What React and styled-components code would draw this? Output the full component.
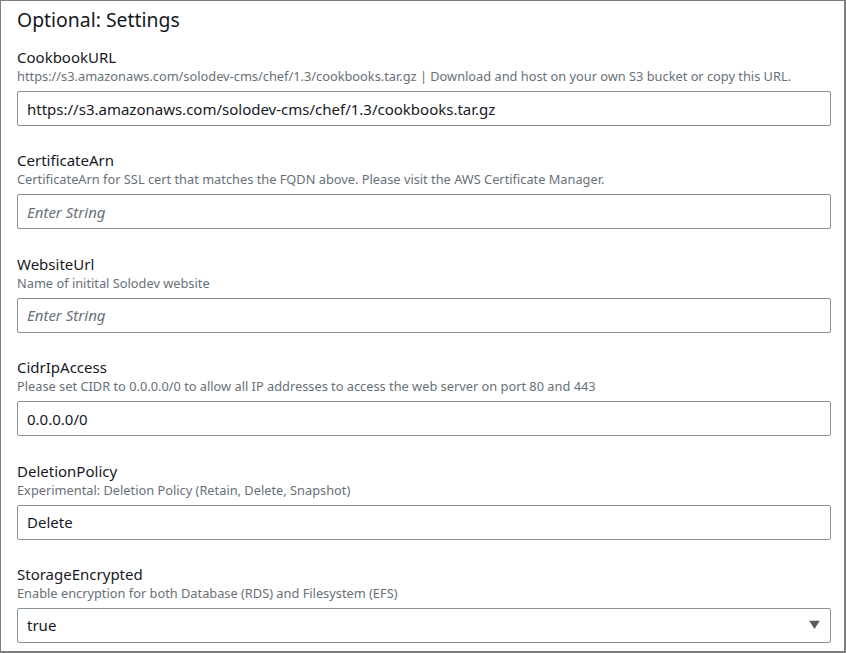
import React from "react";
import styled, { createGlobalStyle } from "styled-components";

const Global = createGlobalStyle`
  html, body { margin: 0; padding: 0; background: #fff; }
  body { font-family: "Noto Sans", "Open Sans", sans-serif; color: #16191f; }
`;

const Frame = styled.div`
  box-sizing: border-box;
  width: 846px;
  height: 653px;
  border: 1px solid #7d7d7d;
  border-right-width: 2px;
  border-bottom-width: 2px;
  padding: 6px 13px 0 16px;
  overflow: hidden;
`;

const Title = styled.h2`
  margin: 0 0 14px;
  font-size: 19.4px;
  font-weight: 400;
  line-height: 26px;
  color: #16191f;
`;

const Fields = styled.div`
  display: flex;
  flex-direction: column;
  gap: 24.4px;
`;

const Field = styled.div`
  display: flex;
  flex-direction: column;
`;

const Label = styled.label`
  font-size: 15px;
  line-height: 20px;
  color: #16191f;
`;

const Description = styled.div`
  font-size: 12.8px;
  line-height: 18px;
  color: #687078;
  margin-bottom: 6px;
`;

const InputBox = styled.div`
  box-sizing: border-box;
  position: relative;
  height: 35px;
  border: 1px solid #879596;
  border-radius: 2px;
  padding: 0 9px;
  display: flex;
  align-items: center;
  font-size: 15px;
  color: ${(p) => (p.$placeholder ? "#687078" : "#16191f")};
  font-style: ${(p) => (p.$placeholder ? "italic" : "normal")};
`;

const Caret = styled.svg`
  position: absolute;
  right: 10px;
  top: 50%;
  transform: translateY(-50%);
`;

const fields = [
  {
    label: "CookbookURL",
    desc: "https://s3.amazonaws.com/solodev-cms/chef/1.3/cookbooks.tar.gz | Download and host on your own S3 bucket or copy this URL.",
    value: "https://s3.amazonaws.com/solodev-cms/chef/1.3/cookbooks.tar.gz",
  },
  {
    label: "CertificateArn",
    desc: "CertificateArn for SSL cert that matches the FQDN above. Please visit the AWS Certificate Manager.",
    placeholder: "Enter String",
  },
  {
    label: "WebsiteUrl",
    desc: "Name of initital Solodev website",
    placeholder: "Enter String",
  },
  {
    label: "CidrIpAccess",
    desc: "Please set CIDR to 0.0.0.0/0 to allow all IP addresses to access the web server on port 80 and 443",
    value: "0.0.0.0/0",
  },
  {
    label: "DeletionPolicy",
    desc: "Experimental: Deletion Policy (Retain, Delete, Snapshot)",
    value: "Delete",
  },
  {
    label: "StorageEncrypted",
    desc: "Enable encryption for both Database (RDS) and Filesystem (EFS)",
    value: "true",
    select: true,
  },
];

export default function App() {
  return (
    <>
      <Global />
      <Frame>
        <Title>Optional: Settings</Title>
        <Fields>
          {fields.map((f) => (
            <Field key={f.label}>
              <Label>{f.label}</Label>
              <Description>{f.desc}</Description>
              <InputBox $placeholder={!f.value}>
                {f.value || f.placeholder}
                {f.select && (
                  <Caret width="11" height="9" viewBox="0 0 11 9">
                    <path d="M0 0 H11 L5.5 8.5 Z" fill="#545b64" />
                  </Caret>
                )}
              </InputBox>
            </Field>
          ))}
        </Fields>
      </Frame>
    </>
  );
}
